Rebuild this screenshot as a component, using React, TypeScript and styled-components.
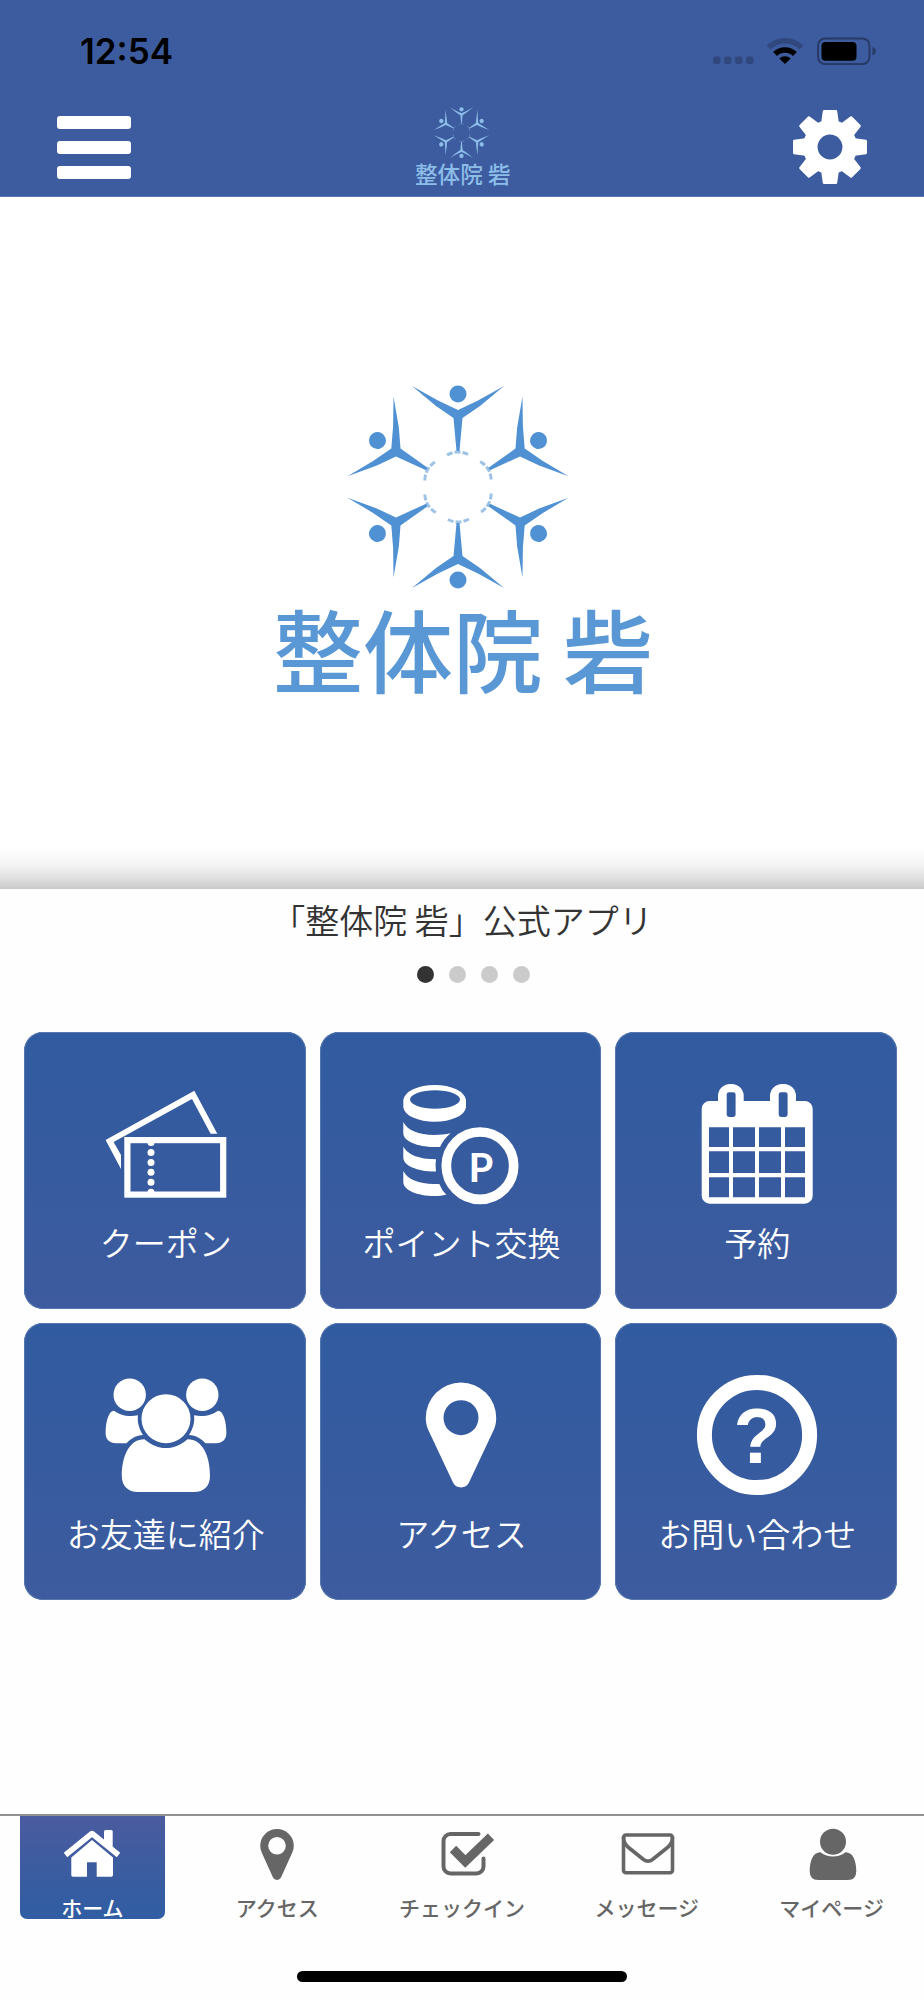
import React from "react";
import styled, { createGlobalStyle, css } from "styled-components";

const GlobalStyle = createGlobalStyle`
  *, *::before, *::after { box-sizing: border-box; }
  body {
    margin: 0;
    background: #fefefe;
    color: #333;
    font-family: "Noto Sans CJK JP", "Noto Sans", sans-serif;
  }
  button { font: inherit; }
`;

const Page = styled.div`
  display: flex;
  flex-direction: column;
  min-height: 100vh;
`;

/* ---------- Header ---------- */

const Header = styled.header`
  background: #3d5c9f;
  border-bottom: 1px solid #5b74ad;
`;

const StatusBar = styled.div`
  display: flex;
  align-items: center;
  justify-content: space-between;
  height: 98px;
  padding: 3px 48px 0 80px;
`;

const Clock = styled.time`
  color: #000;
  font: 600 35px/40px Inter, sans-serif;
`;

const Toolbar = styled.div`
  display: flex;
  align-items: center;
  justify-content: space-between;
  height: 98px;
  padding: 0 57px;
`;

const IconButton = styled.button`
  display: flex;
  align-items: center;
  justify-content: center;
  width: 74px;
  height: 74px;
  padding: 0;
  border: 0;
  background: none;
  color: #fff;
  cursor: pointer;
`;

const MenuBars = styled.span`
  display: flex;
  flex-direction: column;
  gap: 12px;
  width: 100%;

  i {
    height: 13px;
    border-radius: 3px;
    background: currentColor;
  }
`;

/* ---------- Hero ---------- */

const Hero = styled.section`
  display: flex;
  align-items: center;
  justify-content: center;
  height: 692px;
  background: linear-gradient(to top, #cacaca 0, #e2e2e2 12px, #f5f5f5 25px, #fff 42px);
`;

const LogoArt = styled.svg<{ $width: number }>`
  display: block;
  width: ${(p) => p.$width}px;
  height: auto;
  overflow: visible;
`;

const Caption = styled.h1`
  margin: 0;
  padding-top: 6px;
  font-size: 34px;
  font-weight: 350;
  line-height: 50px;
  text-align: center;
`;

const Dots = styled.div`
  display: flex;
  justify-content: center;
  gap: 15px;
  padding: 21px 0 0 22px;
`;

const Dot = styled.button<{ $active?: boolean }>`
  width: 17px;
  height: 17px;
  padding: 0;
  border: 0;
  border-radius: 50%;
  background: ${(p) => (p.$active ? "#333" : "#cbcbcb")};
`;

/* ---------- Tiles ---------- */

const Content = styled.main`
  flex: 1;
`;

const TileGrid = styled.div`
  display: grid;
  grid-template-columns: repeat(3, 1fr);
  gap: 14px;
  padding: 49px 27px 60px 24px;
`;

const Tile = styled.a`
  display: flex;
  flex-direction: column;
  align-items: center;
  gap: 14px;
  height: 277px;
  padding: 52px 0 0 2px;
  border-radius: 19px;
  background: linear-gradient(#315ba0, #3d5b9e);
  box-shadow: inset 0 0 0 1px #5577b0;
  color: #fff;
  text-decoration: none;

  svg {
    flex: none;
    width: 120px;
    height: 120px;
    overflow: visible;
  }
`;

const TileLabel = styled.span`
  font-size: 33px;
  font-weight: 350;
  line-height: 48px;
  white-space: nowrap;
`;

/* ---------- Tab bar ---------- */

const Footer = styled.footer`
  border-top: 2px solid #90908f;
`;

const TabBar = styled.nav`
  display: grid;
  grid-template-columns: repeat(5, 1fr);
`;

const Tab = styled.a<{ $active?: boolean }>`
  display: flex;
  flex-direction: column;
  align-items: center;
  justify-self: center;
  gap: 10px;
  width: 145px;
  height: 103px;
  padding-top: 12px;
  border-radius: 0 0 7px 7px;
  color: #666;
  text-decoration: none;

  svg {
    flex: none;
    width: 60px;
    height: 54px;
    overflow: visible;
  }

  ${(p) =>
    p.$active &&
    css`
      background: linear-gradient(#4b5b9f, #3c5ca0 50%, #305da3);
      color: #fff;
    `}
`;

const TabLabel = styled.span`
  font-size: 21px;
  font-weight: 500;
  line-height: 30px;
  white-space: nowrap;
`;

const HomeIndicator = styled.div`
  width: 330px;
  height: 11px;
  margin: 52px auto 18px;
  border-radius: 6px;
  background: #000;
`;

/* ---------- Drawings ---------- */

function Logo({ width, figure, text }: { width: number; figure: string; text: string }) {
  return (
    <LogoArt $width={width} viewBox="0 0 378 316" role="img" aria-label="整体院 砦">
      <g transform="translate(185 102)" fill={figure}>
        {[0, 60, 120, 180, 240, 300].map((angle) => (
          <g key={angle} transform={`rotate(${angle})`}>
            <circle cy="-93" r="8.5" />
            <path d="M-46-101 L-20-86.500 L0-77 L20-86.500 L46-101 L22-81 L4.500-69 L1.500-36 H-1.500 L-4.500-69 L-22-81Z" />
            <path d="M-11-32 Q0-38 11-32" fill="none" stroke={figure} strokeWidth="3" strokeDasharray="6 2" opacity=".55" />
          </g>
        ))}
      </g>
      <text x="0" y="301" fontSize="90" fontWeight="500" fill={text}>
        整体院 砦
      </text>
    </LogoArt>
  );
}

const StatusIcons = () => (
  <svg width="163" height="28" viewBox="0 0 163 28" aria-hidden="true">
    <g fill="#31487f">
      {[0, 11, 22, 33].map((x) => (
        <rect key={x} x={x} y="19.500" width="7.500" height="7.500" rx="2.200" />
      ))}
    </g>
    <path d="M55.600 10.600 A23.200 23.200 0 0 1 88.400 10.600" fill="none" stroke="#31487f" strokeWidth="5.600" />
    <path d="M62.100 17.100 A14 14 0 0 1 81.900 17.100" fill="none" stroke="#000" strokeWidth="5.600" />
    <path d="M72 27 L66.300 21.600 A8 8 0 0 1 77.700 21.600Z" />
    <rect x="105" y="1.500" width="51.500" height="25.500" rx="7" fill="none" stroke="#273a66" strokeWidth="2" />
    <rect x="108.500" y="5" width="35" height="18.700" rx="4" />
    <path d="M159.500 10 Q162.800 11.500 162.800 14.300 Q162.800 17 159.500 18.500Z" fill="#273a66" />
  </svg>
);

const GearIcon = () => (
  <svg width="74" height="74" viewBox="-37 -37 74 74" fill="currentColor" aria-hidden="true">
    {[0, 45, 90, 135, 180, 225, 270, 315].map((a) => (
      <path key={a} transform={`rotate(${a})`} d="M-9-23 L-7.200-36 Q-7-37-6-37 H6 Q7-37 7.200-36 L9-23Z" />
    ))}
    <circle r="19.700" fill="none" stroke="currentColor" strokeWidth="14.500" />
  </svg>
);

const CouponIcon = () => (
  <svg viewBox="0 0 120 120" fill="currentColor" aria-hidden="true">
    <path d="M-.4 56 L88.300 6.700 L111.300 49.700 H104.600 L86 15 L7.600 58 L15 71 V85Z" />
    <rect x="21.400" y="56.100" width="95.800" height="54.500" fill="none" stroke="currentColor" strokeWidth="6.200" />
    {[58.5, 68.4, 78.4, 88.3, 98.3, 108.3].map((y) => (
      <circle key={y} cx="45" cy={y} r="3.500" />
    ))}
  </svg>
);

const PointsIcon = () => (
  <svg viewBox="0 0 120 120" fill="currentColor" aria-hidden="true">
    <path
      fillRule="evenodd"
      d="M2.300 16 A31.400 16 0 0 1 65 16 V23.300 A31.400 15.400 0 0 1 2.300 23.300Z M9 15.500 A25 9.200 0 0 0 59 15.500 A25 9.200 0 0 0 9 15.500Z"
    />
    <path d="M2.300 38 C6 46 18 51 33 51 C39 51 45 50.500 49.600 49.300 C45 53 41.500 57.500 39 63 H33.700 C16 63 2.300 57 2.300 49.300Z" />
    <path d="M2.300 62.500 C6 70.500 18 75.300 35 75.300 Q34 81.500 35 87.500 C16 87.700 2.300 81.500 2.300 73.500Z" />
    <path d="M2.300 87 C6 95 18 100 33 100 H38.300 Q40.500 106 45.300 110.700 C41 111.600 38 112 33.700 112 C16 112 2.300 106 2.300 98Z" />
    <circle cx="79" cy="81.700" r="33.700" fill="none" stroke="currentColor" strokeWidth="9.700" />
    <text x="80" y="98" fontSize="40" fontWeight="700" fontFamily="Lato, sans-serif" textAnchor="middle">
      P
    </text>
  </svg>
);

const columns = [
  [12, 20],
  [36, 22],
  [62, 22],
  [88, 20],
];
const rows = [
  [43.3, 19.7],
  [67.3, 21.7],
  [93.3, 20],
];
const calendarCells = rows
  .flatMap(([y, h]) => columns.map(([x, w]) => `M${x} ${y}h${w}v${h}h${-w}Z`))
  .join(" ");

const CalendarIcon = () => (
  <svg viewBox="0 0 120 120" fill="currentColor" fillRule="evenodd" aria-hidden="true">
    <path
      d={`M4.700 25 a8 8 0 0 1 8-8 H21 V12 A12 12 0 0 1 33 0 h1.700 A12 12 0 0 1 46.700 12 V17 H73 V12
        A12 12 0 0 1 85 0 h2 A12 12 0 0 1 99 12 V17 h8.700 a8 8 0 0 1 8 8 V111.700 a8 8 0 0 1 -8 8
        H12.700 a8 8 0 0 1 -8 -8Z
        M32 8.300 h4.300 q2.300 0 2.300 2.300 v20 q0 2.300 -2.300 2.300 h-4.300 q-2.300 0 -2.300 -2.300 v-20 q0 -2.300 2.300 -2.300Z
        M84 8.300 h4.300 q2.300 0 2.300 2.300 v20 q0 2.300 -2.300 2.300 h-4.300 q-2.300 0 -2.300 -2.300 v-20 q0 -2.300 2.300 -2.300Z
        ${calendarCells}`}
    />
  </svg>
);

const sidePerson =
  "M8 35.700 C13 39.500 22 42.500 32 40.300 C31 47 33 54 37 60 C30 60.500 25 63.500 20.500 68.300 H10 C3.500 68.300 -.4 64 -.4 58 C-.4 46 3 35.500 8 35.700Z";

const FriendsIcon = () => (
  <svg viewBox="0 0 120 120" fill="currentColor" aria-hidden="true">
    <circle cx="23.700" cy="19.700" r="16.200" />
    <circle cx="96.300" cy="19.700" r="16.200" />
    <circle cx="60" cy="43.700" r="24.500" />
    <path d={sidePerson} />
    <path d={sidePerson} transform="matrix(-1 0 0 1 120 0)" />
    <path d="M38.500 64.200 C45 70 52 73 60 73 C68 73 75 70 81.500 64.200 C96 64 104 80 104 101 C104 111 98 117 88 117 H32 C22 117 15.800 111 15.800 101 C15.800 80 24 64 38.500 64.200Z" />
  </svg>
);

const PinIcon = () => (
  <svg viewBox="0 0 120 120" fill="currentColor" fillRule="evenodd" aria-hidden="true">
    <path d="M60 7.500 A35.200 35.200 0 0 0 24.800 42.700 C24.800 47 25.500 51 27.300 55 L52 107.500 A9 9 0 0 0 68 107.500 L92.700 55 C94.500 51 95.200 47 95.200 42.700 A35.200 35.200 0 0 0 60 7.500Z M60 25.200 a17.500 17.500 0 1 1 0 35 a17.500 17.500 0 1 1 0 -35Z" />
  </svg>
);

const QuestionIcon = () => (
  <svg viewBox="0 0 120 120" fill="currentColor" aria-hidden="true">
    <circle cx="60" cy="60" r="52.600" fill="none" stroke="currentColor" strokeWidth="15" />
    <text x="60" y="88" fontSize="77" fontWeight="700" fontFamily="'Liberation Sans', sans-serif" textAnchor="middle">
      ?
    </text>
  </svg>
);

const HomeTabIcon = () => (
  <svg viewBox="0 0 60 54" fill="currentColor" aria-hidden="true">
    <path d="M3.500 27 L30 5.500 L56.500 27" fill="none" stroke="currentColor" strokeWidth="5.500" strokeLinejoin="round" />
    <path d="M42 13 V3.500 Q42 2 43.500 2 H49.200 Q50.700 2 50.700 3.500 V20Z" />
    <path d="M30 12 L51 29.500 V47 Q51 48.700 49.300 48.700 H34.700 V34.300 H25 V48.700 H11 Q9.300 48.700 9.300 47 V29.500Z" />
  </svg>
);

const PinTabIcon = () => (
  <svg viewBox="0 0 60 54" fill="currentColor" fillRule="evenodd" aria-hidden="true">
    <path d="M30 1 A16.800 16.800 0 0 0 13.200 17.800 Q13.200 21.500 14.700 24.500 L26 49.500 A4.500 4.500 0 0 0 34 49.500 L45.300 24.500 Q46.800 21.500 46.800 17.800 A16.800 16.800 0 0 0 30 1Z M30 9 a8.800 8.800 0 1 1 0 17.600 a8.800 8.800 0 1 1 0 -17.600Z" />
  </svg>
);

const CheckTabIcon = () => (
  <svg viewBox="0 0 60 54" fill="none" stroke="currentColor" aria-hidden="true">
    <path d="M46.500 6 H18.500 a7 7 0 0 0 -7 7 V38.500 a7 7 0 0 0 7 7 H44.500 a7 7 0 0 0 7 -7 V30.500" strokeWidth="4" strokeLinecap="round" />
    <path d="M21 21 L33.300 33.500 L59 8.800" strokeWidth="9" />
  </svg>
);

const MailTabIcon = () => (
  <svg viewBox="0 0 60 54" fill="none" stroke="currentColor" strokeWidth="3.600" aria-hidden="true">
    <rect x="6.500" y="7" width="49" height="37.700" rx="2.500" />
    <path d="M6.500 9 C6.500 14.500 8.500 17 11.500 19.500 L26.500 31.500 Q31 34.800 35.500 31.500 L50.500 19.500 C53.500 17 55.500 14.500 55.500 9" />
  </svg>
);

const UserTabIcon = () => (
  <svg viewBox="0 0 60 54" fill="currentColor" aria-hidden="true">
    <circle cx="31" cy="13.700" r="13" />
    <path d="M18.500 24.200 C26 30 36 30 43.500 24.200 C51 24 54.300 33 54.300 43 Q54.300 52 46 52 H16 Q7.700 52 7.700 43 C7.700 33 11 24 18.500 24.200Z" />
  </svg>
);

const tiles = [
  { label: "クーポン", Icon: CouponIcon },
  { label: "ポイント交換", Icon: PointsIcon },
  { label: "予約", Icon: CalendarIcon },
  { label: "お友達に紹介", Icon: FriendsIcon },
  { label: "アクセス", Icon: PinIcon },
  { label: "お問い合わせ", Icon: QuestionIcon },
];

const tabs = [
  { label: "ホーム", Icon: HomeTabIcon, active: true },
  { label: "アクセス", Icon: PinTabIcon },
  { label: "チェックイン", Icon: CheckTabIcon },
  { label: "メッセージ", Icon: MailTabIcon },
  { label: "マイページ", Icon: UserTabIcon },
];

export default function App() {
  return (
    <Page lang="ja">
      <GlobalStyle />
      <Header>
        <StatusBar>
          <Clock>12:54</Clock>
          <StatusIcons />
        </StatusBar>
        <Toolbar>
          <IconButton type="button" aria-label="メニュー">
            <MenuBars>
              <i />
              <i />
              <i />
            </MenuBars>
          </IconButton>
          <Logo width={95} figure="#8cbce8" text="#8cbce8" />
          <IconButton type="button" aria-label="設定">
            <GearIcon />
          </IconButton>
        </Toolbar>
      </Header>

      <Content>
        <Hero>
          <Logo width={378} figure="#4f91d3" text="#5a98d5" />
        </Hero>
        <Caption>「整体院 砦」公式アプリ</Caption>
        <Dots>
          {[1, 2, 3, 4].map((n) => (
            <Dot key={n} type="button" $active={n === 1} aria-label={`スライド ${n}`} />
          ))}
        </Dots>
        <TileGrid>
          {tiles.map(({ label, Icon }) => (
            <Tile key={label} href="#">
              <Icon />
              <TileLabel>{label}</TileLabel>
            </Tile>
          ))}
        </TileGrid>
      </Content>

      <Footer>
        <TabBar>
          {tabs.map(({ label, Icon, active }) => (
            <Tab key={label} href="#" $active={active} aria-current={active ? "page" : undefined}>
              <Icon />
              <TabLabel>{label}</TabLabel>
            </Tab>
          ))}
        </TabBar>
        <HomeIndicator />
      </Footer>
    </Page>
  );
}
